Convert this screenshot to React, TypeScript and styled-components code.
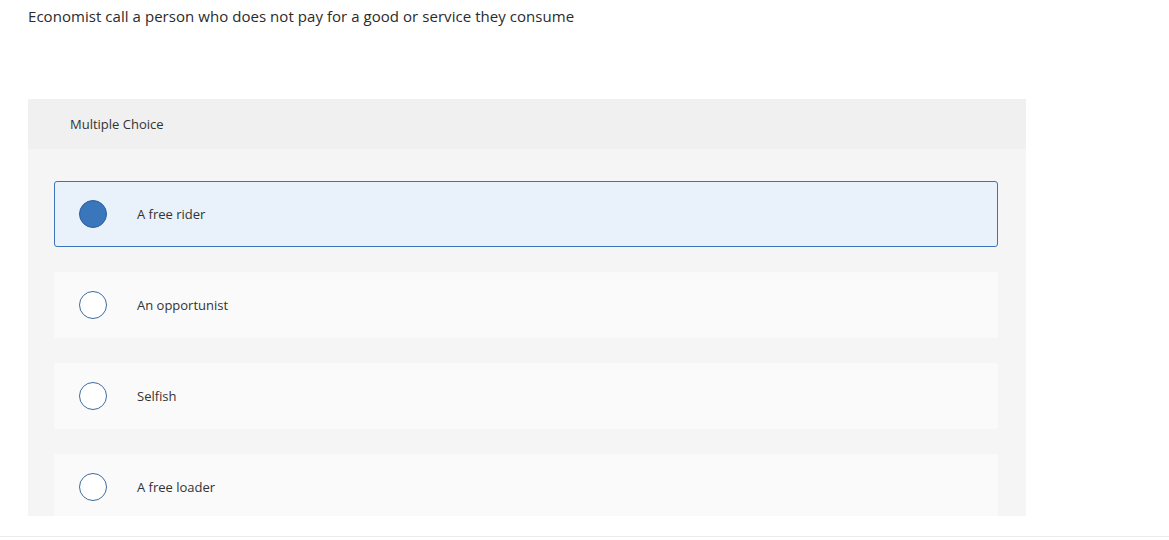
import React from 'react';
import styled, { createGlobalStyle } from 'styled-components';

const GlobalStyle = createGlobalStyle`
  html, body {
    margin: 0;
    padding: 0;
    background: #ffffff;
  }
  body {
    font-family: "Open Sans", Lato, "Liberation Sans", sans-serif;
    color: #333333;
  }
`;

const Page = styled.div`
  width: 1169px;
  height: 537px;
  display: flex;
  flex-direction: column;
  box-sizing: border-box;
  border-bottom: 1px solid #ececec;
  overflow: hidden;
`;

const Question = styled.div`
  padding: 6px 0 0 28px;
  height: 99px;
  flex-shrink: 0;
  box-sizing: border-box;
  font-size: 15px;
  line-height: 20px;
  letter-spacing: 0.05px;
  color: #2b2b2b;
`;

const Panel = styled.div`
  width: 998px;
  height: 417px;
  flex-shrink: 0;
  margin-left: 28px;
  display: flex;
  flex-direction: column;
  background: #f5f5f5;
  overflow: hidden;
`;

const PanelHeader = styled.div`
  height: 50px;
  flex-shrink: 0;
  display: flex;
  align-items: center;
  padding-left: 42px;
  background: #f0f0f0;
  font-size: 13px;
  color: #333333;
`;

const Options = styled.div`
  display: flex;
  flex-direction: column;
  gap: 25px;
  padding: 32px 28px 0 26px;
`;

const Option = styled.label<{ $selected: boolean }>`
  height: 66px;
  flex-shrink: 0;
  box-sizing: border-box;
  display: flex;
  align-items: center;
  padding-left: 24px;
  border-radius: 3px;
  border: 1px solid ${(p) => (p.$selected ? '#3b74ba' : 'transparent')};
  background: ${(p) => (p.$selected ? '#e9f1fa' : '#fafafa')};
  cursor: pointer;
`;

const Radio = styled.span<{ $selected: boolean }>`
  width: 28px;
  height: 28px;
  box-sizing: border-box;
  border-radius: 50%;
  border: 1px solid ${(p) => (p.$selected ? '#2b5f9c' : '#3d6c9f')};
  background: ${(p) => (p.$selected ? '#3a76bb' : '#ffffff')};
  flex-shrink: 0;
`;

const OptionText = styled.span`
  margin-left: 30px;
  font-size: 13px;
  color: #333333;
`;

const choices = ['A free rider', 'An opportunist', 'Selfish', 'A free loader'];

function App(): React.ReactElement {
  const selected = 0;
  return (
    <Page>
      <GlobalStyle />
      <Question>
        Economist call a person who does not pay for a good or service they consume
      </Question>
      <Panel>
        <PanelHeader>Multiple Choice</PanelHeader>
        <Options>
          {choices.map((c, i) => (
            <Option key={c} $selected={i === selected}>
              <Radio $selected={i === selected} />
              <OptionText>{c}</OptionText>
            </Option>
          ))}
        </Options>
      </Panel>
    </Page>
  );
}

export default App;
